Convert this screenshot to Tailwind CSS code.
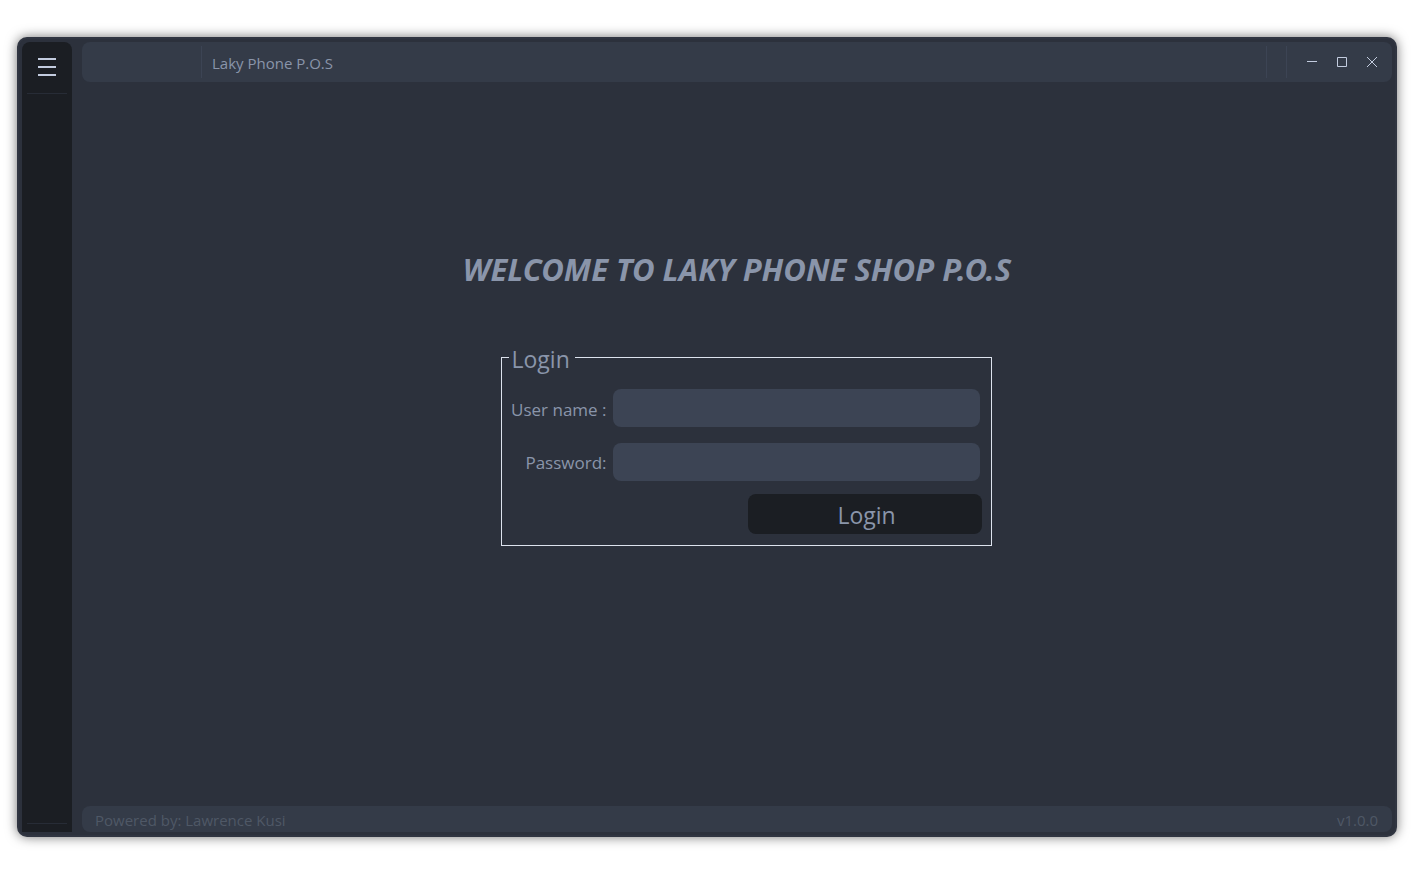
<!DOCTYPE html>
<html lang="en">
<head>
<meta charset="utf-8">
<meta name="viewport" content="width=device-width, initial-scale=1">
<title>Laky Phone P.O.S</title>
<script src="https://cdn.jsdelivr.net/npm/@tailwindcss/browser@4"></script>
</head>
<body class="flex min-h-screen bg-white pt-[37px] pr-4 pb-[42px] pl-[17px] font-['Open_Sans','Noto_Sans',sans-serif] text-[#8a95aa]">
<div class="flex flex-1 rounded-[10px] border-2 border-[#303541] bg-[#2c313c] p-[3px] shadow-[0_0_12px_rgba(0,0,0,0.55)]">
  <aside class="flex w-[50px] shrink-0 flex-col justify-between rounded-t-lg bg-[#1b1e23] px-[5px]">
    <div class="flex h-[52px] justify-center border-b border-[#272c36]">
      <button type="button" aria-label="Toggle menu" class="flex h-[50px] w-10 items-center justify-center">
        <svg class="size-[18px]" viewBox="0 0 18 18" fill="#c3ccdf"><path d="M0 0h18v2H0zM0 8h18v2H0zM0 16h18v2H0z"/></svg>
      </button>
    </div>
    <div class="h-[9px] border-t border-[#272c36]"></div>
  </aside>
  <div class="ml-[10px] flex min-w-0 flex-1 flex-col">
    <header class="flex h-10 items-center rounded-lg bg-[#343b48]">
      <div class="h-8 w-[120px] border-r border-[#3c4454]"></div>
      <div class="flex-1 pt-px pl-[10px] text-[15px] leading-5">Laky Phone P.O.S</div>
      <div class="h-8 w-[21px] border-x border-[#3c4454]"></div>
      <div class="flex pr-[5px] pl-[10px] text-[#c3ccdf]">
        <button type="button" aria-label="Minimize" class="flex size-[30px] items-center justify-center"><svg class="size-[10px]" viewBox="0 0 10 10" fill="currentColor"><path d="M0 4h10v1H0z"/></svg></button>
        <button type="button" aria-label="Maximize" class="flex size-[30px] items-center justify-center"><svg class="size-[10px]" viewBox="0 0 10 10" fill="none" stroke="currentColor"><path d="M.5.5h9v9h-9z"/></svg></button>
        <button type="button" aria-label="Close" class="flex size-[30px] items-center justify-center"><svg class="size-[10px]" viewBox="0 0 10 10" fill="none" stroke="currentColor"><path d="M0 0l10 10M10 0L0 10"/></svg></button>
      </div>
    </header>
    <main class="flex flex-1 flex-col items-center pt-[167px]">
      <h1 class="text-center font-['Noto_Sans',sans-serif] text-[31px] leading-10 font-bold italic">WELCOME TO LAKY PHONE SHOP P.O.S</h1>
      <form class="mt-[53px] ml-[18px] w-full max-w-[491px]">
        <fieldset class="border border-[#dde3ee] pr-[9px] pb-[11px] pl-[7px]">
          <legend class="pt-[3px] pr-[5px] pl-[3px] text-[23px] leading-7">Login</legend>
          <div class="mt-4 flex items-center gap-[6px] pr-[2px]">
            <label for="user" class="w-[98px] pt-1 text-right text-[17px] leading-6">User name :</label>
            <input id="user" type="text" class="h-[38px] min-w-0 flex-1 rounded-lg bg-[#3c4454] px-3 outline-none">
          </div>
          <div class="mt-4 flex items-center gap-[6px] pr-[2px]">
            <label for="pass" class="w-[98px] pt-[2px] text-right text-[17px] leading-6">Password:</label>
            <input id="pass" type="password" class="h-[38px] min-w-0 flex-1 rounded-lg bg-[#3c4454] px-3 outline-none">
          </div>
          <div class="mt-[13px] flex justify-end">
            <button type="submit" class="h-10 w-[234px] rounded-lg bg-[#1b1e23] pt-[2px] pl-1 text-[23px] leading-8">Login</button>
          </div>
        </fieldset>
      </form>
    </main>
    <footer class="flex h-[26px] items-center justify-between rounded-lg bg-[#343b48] pt-[2px] pr-[14px] pl-[13px] text-[15px] leading-5 text-[#4f5866]">
      <span>Powered by: Lawrence Kusi</span><span>v1.0.0</span>
    </footer>
  </div>
</div>
</body>
</html>
